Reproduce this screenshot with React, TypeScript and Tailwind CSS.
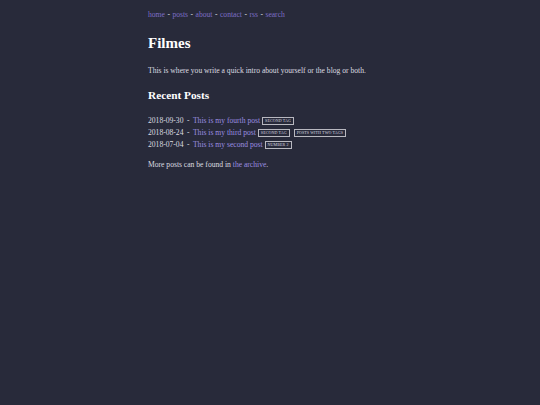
const nav = ['home', 'posts', 'about', 'contact', 'rss', 'search'];

const posts = [
  { date: '2018-09-30', title: 'This is my fourth post', tags: ['second tag'] },
  { date: '2018-08-24', title: 'This is my third post', tags: ['second tag', 'posts with two tags'] },
  { date: '2018-07-04', title: 'This is my second post', tags: ['number 2'] },
];

export default function App() {
  return (
    <div className="min-h-[405px] w-full bg-[#282a3a] text-[#dcdce0] font-['Liberation_Serif',serif] text-[7.6px] leading-[12px]">
      <div className="mx-auto w-[244px] pt-[9px]">
        <nav className="flex items-center text-[#7d6ec6]">
          {nav.map((item, i) => (
            <span key={item} className="flex items-center">
              <a href="#">{item}</a>
              {i < nav.length - 1 && <span className="mx-[2.5px] text-[#dcdce0]">-</span>}
            </span>
          ))}
        </nav>

        <h1 className="mt-[12px] text-[15px] leading-[20px] font-bold text-white">Filmes</h1>

        <p className="mt-[12px]">This is where you write a quick intro about yourself or the blog or both.</p>

        <h2 className="mt-[11px] text-[11.3px] leading-[14px] font-bold text-white">Recent Posts</h2>

        <ul className="mt-[13px]">
          {posts.map((p) => (
            <li key={p.date} className="flex items-center h-[12px]">
              <span>{p.date}</span>
              <span className="mx-[3.5px]">-</span>
              <a href="#" className="text-[#9b8ee0]">{p.title}</a>
              {p.tags.map((t) => (
                <span
                  key={t}
                  className="ml-[2px] mr-[2px] border border-[#b8b8c0] px-[2px] text-[4px] leading-[6px] uppercase tracking-[0.1px] text-[#dcdce0]"
                >
                  {t}
                </span>
              ))}
            </li>
          ))}
        </ul>

        <p className="mt-[8px]">
          More posts can be found in <a href="#" className="text-[#9b8ee0]">the archive</a>.
        </p>
      </div>
    </div>
  );
}
